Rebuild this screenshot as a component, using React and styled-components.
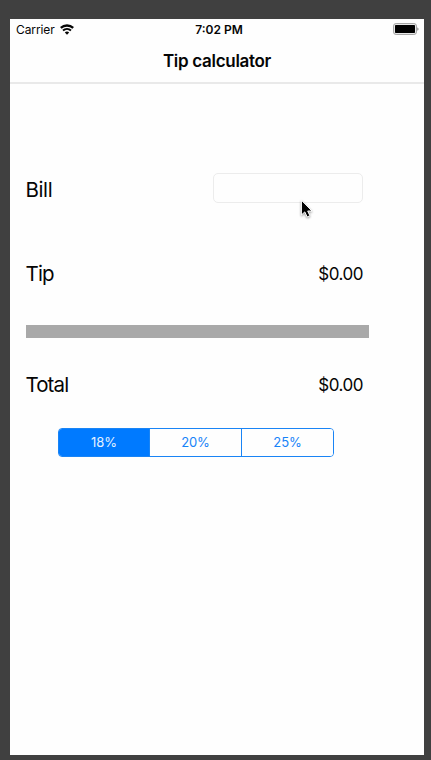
import React, { useState } from "react";
import styled, { createGlobalStyle } from "styled-components";

const GlobalStyle = createGlobalStyle`
  * { box-sizing: border-box; }
  body {
    margin: 0;
    background: #404040;
    font-family: Inter, "Liberation Sans", sans-serif;
    color: #050505;
  }
`;

const Desktop = styled.div`
  height: 760px;
  padding: 19px 7px 5px 10px;
  background: #404040;
  overflow: hidden;
`;

const Phone = styled.main`
  position: relative;
  height: 736px;
  background: #fefefe;
`;

const StatusBar = styled.div`
  display: grid;
  grid-template-columns: 1fr auto 1fr;
  grid-template-rows: 20px;
  align-items: center;
  height: 20px;
  padding: 0 5px 0 6px;
  font-size: 12px;
  line-height: 18px;
`;

const Carrier = styled.div`
  display: flex;
  align-items: center;
  gap: 5px;
  letter-spacing: -0.1px;
`;

const CarrierName = styled.span`
  padding-top: 2px;
`;

const Clock = styled.div`
  padding-top: 2px;
  margin-left: 3px;
  font-weight: 600;
  letter-spacing: 0;
`;

const BatteryIcon = styled.svg`
  justify-self: end;
`;

const NavBar = styled.header`
  height: 45px;
  border-bottom: 2px solid #e9e9e9;
  text-align: center;
`;

const Title = styled.h1`
  margin: 0;
  font-size: 17px;
  font-weight: 600;
  line-height: 45px;
  letter-spacing: -0.3px;
`;

const Form = styled.section`
  padding: 89px 61px 0 16px;
`;

const Row = styled.div`
  display: flex;
  align-items: center;
  justify-content: space-between;
  height: 30px;
  margin-bottom: ${(p) => p.$gap}px;
`;

const Label = styled.label`
  padding-top: 3px;
  margin-left: -0.5px;
  font-size: 20.5px;
  line-height: 26px;
  letter-spacing: ${(p) => p.$tracking}px;
`;

const BillInput = styled.input`
  width: 150px;
  height: 30px;
  padding: 0 7px;
  border: 1px solid #ececec;
  border-radius: 5px;
  background: #fefefe;
  font: 17px Inter, sans-serif;
  text-align: right;
  outline: none;
`;

const Amount = styled.output`
  padding-top: 4px;
  font-size: 17px;
  line-height: 24px;
  letter-spacing: -0.5px;
`;

const Divider = styled.div`
  width: 343px;
  height: 13px;
  margin-bottom: 30px;
  background: #a9a9a9;
`;

const Segments = styled.div`
  display: grid;
  grid-template-columns: 91px 92px 1fr;
  width: 276px;
  height: 29px;
  margin-left: 32px;
  border: 1px solid #1984f5;
  border-radius: 4px;
  overflow: hidden;
`;

const Segment = styled.button`
  padding: 0;
  border: 0;
  border-right: ${(p) => (p.$last ? "0" : "1px solid #1984f5")};
  background: ${(p) => (p.$active ? "#007aff" : "#fefefe")};
  color: ${(p) => (p.$active ? "#e4f1ff" : "#1683f8")};
  font: 13px/27px Inter, sans-serif;
  letter-spacing: -0.1px;
`;

const Pointer = styled.svg`
  position: absolute;
  left: 289px;
  top: 179px;
  pointer-events: none;
  filter: drop-shadow(0 1px 1px rgba(0, 0, 0, 0.4));
`;

const rates = [18, 20, 25];

export default function App() {
  const [bill, setBill] = useState("");
  const [rate, setRate] = useState(18);
  const amount = Number(bill) || 0;
  const tip = (amount * rate) / 100;

  return (
    <Desktop>
      <GlobalStyle />
      <Phone>
        <StatusBar>
          <Carrier>
            <CarrierName>Carrier</CarrierName>
            <svg width="14" height="11" viewBox="0 0 14 11" fill="none" stroke="#050505">
              <path d="M.8 3.9C4.3.7 9.7.7 13.2 3.9" strokeWidth="2.3" />
              <path d="M3 6.5C5.3 4.4 8.7 4.4 11 6.5" strokeWidth="1.9" />
              <path d="M4.8 8.4Q7 6.6 9.2 8.4L7 10.7Z" fill="#050505" stroke="none" />
            </svg>
          </Carrier>
          <Clock>7:02 PM</Clock>
          <BatteryIcon width="27" height="12" viewBox="0 0 27 12">
            <rect x="1.5" y=".5" width="23" height="11" rx="2.6" fill="#e8e8e8" stroke="#a6a6a6" />
            <rect x="3" y="2" width="20" height="8" rx=".7" fill="#000" />
            <path d="M25.4 4.2Q27.6 6 25.4 7.8Z" fill="#777" />
          </BatteryIcon>
        </StatusBar>
        <NavBar>
          <Title>Tip calculator</Title>
        </NavBar>
        <Form>
          <Row $gap={54}>
            <Label htmlFor="bill" $tracking={-0.4}>Bill</Label>
            <BillInput id="bill" value={bill} onChange={(e) => setBill(e.target.value)} />
          </Row>
          <Row $gap={38}>
            <Label $tracking={-0.8}>Tip</Label>
            <Amount>${tip.toFixed(2)}</Amount>
          </Row>
          <Divider />
          <Row $gap={30}>
            <Label $tracking={-0.9}>Total</Label>
            <Amount>${(amount + tip).toFixed(2)}</Amount>
          </Row>
          <Segments>
            {rates.map((r, i) => (
              <Segment
                key={r}
                $last={i === rates.length - 1}
                $active={r === rate}
                onClick={() => setRate(r)}
              >
                {`${r}%`}
              </Segment>
            ))}
          </Segments>
        </Form>
        <Pointer width="16" height="22" viewBox="0 0 16 22">
          <path
            d="M2.4 2.2V17L5.8 13.9L8.2 19L10.9 17.7L8.7 13H13Z"
            fill="#000"
            stroke="#fff"
            strokeWidth="1"
          />
        </Pointer>
      </Phone>
    </Desktop>
  );
}
